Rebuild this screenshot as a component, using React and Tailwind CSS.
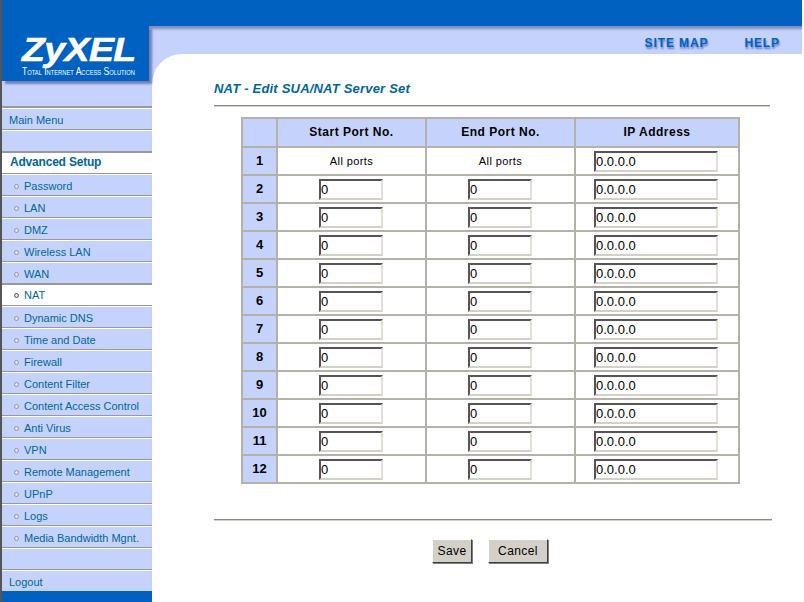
import React from 'react'

const menu = [
    { label: 'Password' },
    { label: 'LAN' },
    { label: 'DMZ' },
    { label: 'Wireless LAN' },
    { label: 'WAN' },
    { label: 'NAT', active: true },
    { label: 'Dynamic DNS' },
    { label: 'Time and Date' },
    { label: 'Firewall' },
    { label: 'Content Filter' },
    { label: 'Content Access Control' },
    { label: 'Anti Virus' },
    { label: 'VPN' },
    { label: 'Remote Management' },
    { label: 'UPnP' },
    { label: 'Logs' },
    { label: 'Media Bandwidth Mgnt.' },
]

const ports = [2, 3, 4, 5, 6, 7, 8, 9, 10, 11, 12]

function SideRow({ children, white }) {
    return (
        <div className={`h-[22px] flex items-center border-b border-[#999999] text-[11px] leading-none text-[#006699] ${white ? 'pt-[1px] bg-white border-t border-t-[#999999]' : 'pt-[3px] border-t border-t-white'}`}>
            {children}
        </div>
    )
}

function Bullet({ dark }) {
    return (
        <span className={`w-[5px] h-[5px] ml-[12px] mr-[5px] rounded-full border ${dark ? 'border-[#555555]' : 'border-[#8f97a8]'} bg-[#dfe3ee]`}></span>
    )
}

function TextBox({ value, wide }) {
    return (
        <input
            readOnly
            value={value}
            className={`${wide ? 'w-[124px]' : 'w-[64px]'} h-[21px] block pl-0 bg-white text-black text-[13px] leading-none border-2 border-t-[#555555] border-l-[#555555] border-r-[#e2dfd8] border-b-[#d4d0c8] outline-none`}
        />
    )
}

function Cell({ children, className = '' }) {
    return <td className={`border-2 border-[#b4b2a8] p-0 ${className}`}>{children}</td>
}

function Push({ children, width }) {
    return (
        <button className={`${width} h-[24px] bg-[#d4d0c8] text-[12px] tracking-[0.4px] text-black border border-t-white border-l-white border-r-[#404040] border-b-[#404040] shadow-[1px_1px_0_#808080]`}>
            {children}
        </button>
    )
}

export default function App() {
    return (
        <div className="w-[804px] h-[602px] flex flex-col bg-white overflow-hidden font-['Liberation_Sans',Arial,sans-serif]">
            <div className="h-full ml-0 mr-[2px] border-l-2 border-[#555555] flex flex-col">
                <div className="h-[26px] bg-[#0061c1]"></div>

                <div className="flex-1 flex">
                    {/* sidebar */}
                    <div className="w-[150px] flex flex-col bg-[#c5d3fc] shadow-[inset_0_5px_3px_-2px_rgba(40,50,110,0.45)]">
                        <div className="relative w-[147px] h-[55px] pl-[20px] pt-[8px] bg-[#0061c1] shadow-[3px_3px_2px_rgba(50,60,120,0.55)] text-white">
                            <div className="text-[34px] leading-[30px] font-bold italic tracking-[-0.5px] origin-left scale-x-[1.1] [-webkit-text-stroke:0.6px_white]">ZyXEL</div>
                            <div className="mt-[1px] text-[10.5px] leading-[12px] whitespace-nowrap [font-variant:small-caps] origin-left scale-x-[0.82]">Total Internet Access Solution</div>
                        </div>
                        <div className="h-[27px] border-b-2 border-[#999999]"></div>
                        <SideRow><span className="pl-[7px]">Main Menu</span></SideRow>
                        <SideRow></SideRow>
                        <SideRow white><span className="pl-[8px] pb-[4px] text-[12px] font-bold tracking-[-0.2px]">Advanced Setup</span></SideRow>
                        {menu.map((item) => (
                            <SideRow key={item.label} white={item.active}>
                                <Bullet dark={item.active} />
                                <span>{item.label}</span>
                            </SideRow>
                        ))}
                        <SideRow></SideRow>
                        <div className="h-[21px] flex items-center pt-[3px] border-t border-white text-[11px] text-[#006699]">
                            <span className="pl-[7px]">Logout</span>
                        </div>
                        <div className="flex-1 bg-[#0061c1]"></div>
                    </div>

                    {/* main */}
                    <div className="flex-1 flex flex-col bg-[#c5d3fc] shadow-[inset_0_5px_3px_-2px_rgba(40,50,110,0.45)]">
                        <div className="h-[28px] flex justify-end items-center gap-[36px] pr-[22px] pt-[5px] text-[12px] font-bold tracking-[0.9px] text-[#0061c1] [text-shadow:1px_2px_2px_rgba(0,50,130,0.55)]">
                            <span>SITE MAP</span>
                            <span>HELP</span>
                        </div>
                        <div className="flex-1 bg-white rounded-tl-[30px] pl-[62px] pt-[27px]">
                            <h1 className="text-[13px] leading-[15px] font-bold italic tracking-[0.2px] text-[#006699]">NAT - Edit SUA/NAT Server Set</h1>
                            <div className="w-[556px] h-[2px] mt-[9px] bg-[#8a8880] border-b border-[#d4d0c8]"></div>

                            <table className="ml-[27px] mt-[10px] w-[497px] table-fixed border-collapse border-2 border-[#9a9890]">
                                <colgroup>
                                    <col className="w-[35px]" />
                                    <col className="w-[149px]" />
                                    <col className="w-[149px]" />
                                    <col className="w-[164px]" />
                                </colgroup>
                                <thead>
                                    <tr className="h-[29px] bg-[#c5d3fc] text-[12px] font-bold tracking-[0.5px] text-black">
                                        <Cell></Cell>
                                        <Cell className="text-center pb-[2px]">Start Port No.</Cell>
                                        <Cell className="text-center pb-[2px]">End Port No.</Cell>
                                        <Cell className="text-center pb-[2px]">IP Address</Cell>
                                    </tr>
                                </thead>
                                <tbody>
                                    <tr className="h-[28px]">
                                        <Cell className="bg-[#c5d3fc] text-center text-[13px] font-bold">1</Cell>
                                        <Cell className="text-center text-[11px] tracking-[0.4px]">All ports</Cell>
                                        <Cell className="text-center text-[11px] tracking-[0.4px]">All ports</Cell>
                                        <Cell className="pl-[18px]"><TextBox value="0.0.0.0" wide /></Cell>
                                    </tr>
                                    {ports.map((n) => (
                                        <tr key={n} className="h-[28px]">
                                            <Cell className="bg-[#c5d3fc] text-center text-[13px] font-bold">{n}</Cell>
                                            <Cell className="pl-[41px]"><TextBox value="0" /></Cell>
                                            <Cell className="pl-[41px]"><TextBox value="0" /></Cell>
                                            <Cell className="pl-[18px]"><TextBox value="0.0.0.0" wide /></Cell>
                                        </tr>
                                    ))}
                                </tbody>
                            </table>

                            <div className="w-[558px] h-[2px] mt-[35px] bg-[#8a8880] border-b border-[#d4d0c8]"></div>
                            <div className="flex gap-[16px] ml-[218px] mt-[18px]">
                                <Push width="w-[40px]">Save</Push>
                                <Push width="w-[60px]">Cancel</Push>
                            </div>
                        </div>
                    </div>
                </div>
            </div>
        </div>
    )
}
